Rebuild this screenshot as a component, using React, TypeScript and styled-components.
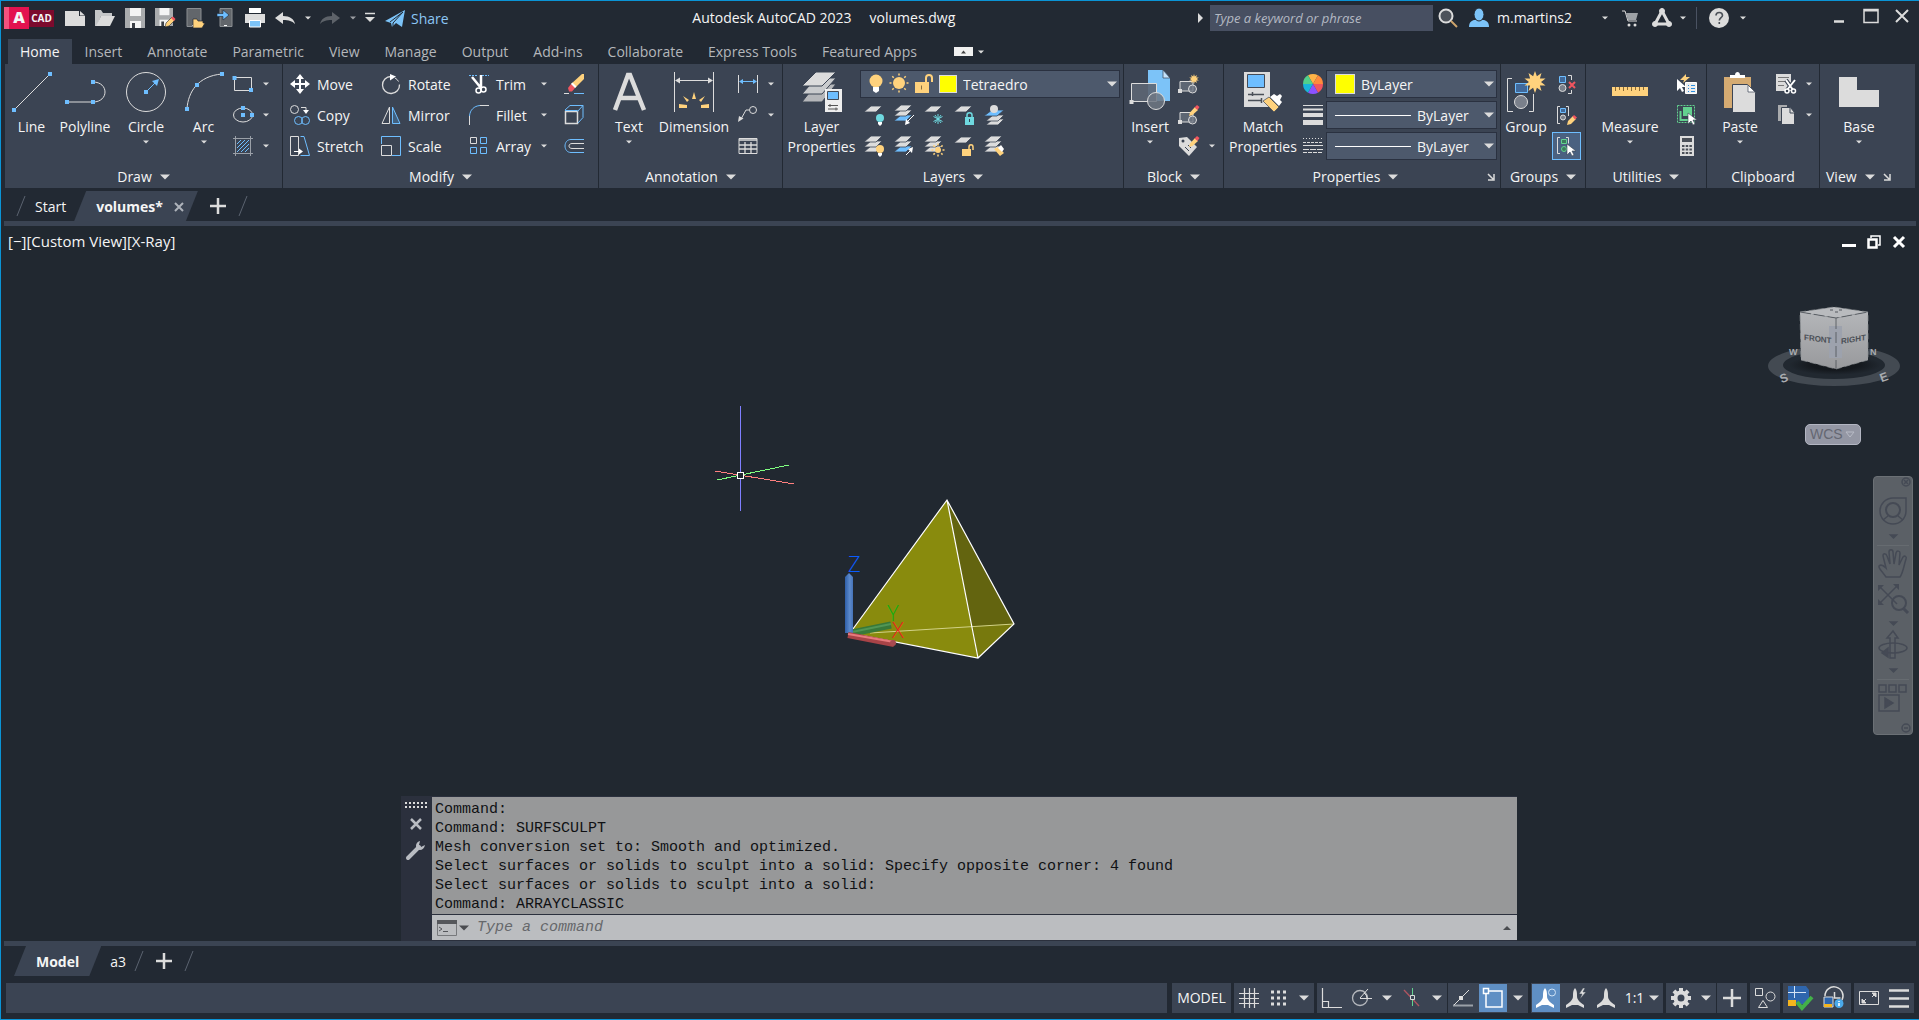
import React from 'react';
import styled, { createGlobalStyle, css } from 'styled-components';

const ink = '#dcdcdc';
const dim = '#9aa0a8';
const blue = '#6ebeff';
const gold = '#ffd27d';
const red = '#f0555f';
const teal = '#6fd9e0';
const green = '#63d18f';
const base = '#222933';
const panel = '#3b4453';

const Global = createGlobalStyle`
  * { box-sizing: border-box; }
  html, body, #root { height: 100%; }
  body {
    margin: 0;
    background: ${base};
    color: #f5f5f5;
    font: 14px/20px "Open Sans", "Noto Sans", sans-serif;
    overflow: hidden;
  }
  button, input, select { font: inherit; color: inherit; }
`;

/* ---------- shared parts ---------- */

const Window = styled.div`
  display: flex;
  flex-direction: column;
  height: 100vh;
  border: 1px solid #0a94d6;
  border-right: 0;
`;

const plain = css`
  border: 0;
  padding: 0;
  margin: 0;
  background: none;
  cursor: default;
`;

const Svg = styled.svg`
  display: block;
  flex: none;
  overflow: visible;
`;

type IconProps = { w?: number; h?: number; children: React.ReactNode };
const Icon = ({ w = 20, h = w, children }: IconProps) => (
  <Svg width={w} height={h} viewBox={`0 0 ${w} ${h}`} fill="none" stroke={ink} aria-hidden="true">
    {children}
  </Svg>
);

const Caret = ({ size = 6, color = ink }: { size?: number; color?: string }) => (
  <Icon w={10} h={10}>
    <path d={size > 6 ? 'M0 2.5h10L5 7.5z' : 'M2 3.5h6L5 6.5z'} fill={color} stroke="none" />
  </Icon>
);

const Dot = ({ x, y, c = blue }: { x: number; y: number; c?: string }) => (
  <rect x={x - 2} y={y - 2} width="4" height="4" fill={c} stroke="none" />
);

/* ---------- title bar ---------- */

const TitleBar = styled.header`
  display: flex;
  align-items: center;
  height: 34px;
  flex: none;
`;

const Logo = styled.div`
  display: flex;
  align-items: center;
  width: 50px;
  height: 22px;
  margin: 0 6px 0 3px;
`;
const LogoA = styled.span`
  width: 25px;
  height: 22px;
  padding-left: 5px;
  text-align: center;
  background: linear-gradient(90deg, #f4527e 0 5px, #e3124f 5px);
  font-size: 16px;
  line-height: 20px;
  font-weight: 800;
`;
const LogoCad = styled.span`
  width: 25px;
  height: 17px;
  text-align: center;
  background: #7c0a2d;
  font-size: 10px;
  line-height: 16px;
  font-weight: 700;
`;

const QuickButton = styled.button<{ $w?: number }>`
  ${plain}
  display: flex;
  align-items: center;
  justify-content: center;
  width: ${(p) => p.$w ?? 30}px;
  height: 28px;
`;

const ShareLink = styled.a`
  display: flex;
  align-items: center;
  gap: 6px;
  margin-left: 5px;
  padding-top: 2px;
  color: #8cc6f5;
  text-decoration: none;
`;

const AppTitle = styled.h1`
  flex: 1;
  display: flex;
  justify-content: center;
  gap: 18px;
  margin: 0;
  padding-left: 6px;
  font-size: 14px;
  font-weight: 400;
  line-height: 20px;
`;

const SearchBox = styled.input`
  ${plain}
  width: 223px;
  height: 26px;
  margin: 0 0 0 3px;
  padding: 0 4px;
  background: #474f61;
  font-size: 13px;
  &::placeholder { color: #b4b9c3; font-style: italic; opacity: 1; }
`;

const UserName = styled.button`
  ${plain}
  display: flex;
  align-items: center;
  gap: 8px;
  width: 128px;
  margin-left: 6px;
`;

const Divider = styled.span`
  width: 1px;
  height: 22px;
  margin: 0 7px;
  background: #4a5262;
`;

const WindowButtons = styled.div`
  display: flex;
  margin: 0 0 4px 71px;
  padding-right: 2px;
`;

function Phone({ children }: { children: React.ReactNode }) {
  return (
    <Icon>
      <path d="M2 .5h14v18H2z" fill="#62666b" stroke="#8a8e92" />
      <path d="M7 17.500h3" stroke="#fff" />
      {children}
    </Icon>
  );
}

const floppy = (
  <>
    <path d="M0 0h20v20H0z" fill="#a9abad" stroke="none" />
    <path d="M5 0h11v8H5z" fill="#f4f4f4" stroke="none" />
    <path d="M5 13h11v7H5z" fill="#f4f4f4" stroke="none" />
    <path d="M7 15h3v5H7z" fill="#3b3f46" stroke="none" />
  </>
);

function TitleArea() {
  return (
    <TitleBar>
      <Logo>
        <LogoA>A</LogoA>
        <LogoCad>CAD</LogoCad>
      </Logo>
      <QuickButton aria-label="New">
        <Icon><path d="M0 3h14v5h6v10H0zM15 3l5 4.500h-5z" fill={ink} stroke="none" /></Icon>
      </QuickButton>
      <QuickButton aria-label="Open">
        <Icon>
          <path d="M0 18V2h6l2 3h9v3H6L2 18z" fill="#c4c6c8" stroke="none" />
          <path d="M6 8h14l-5 10H1z" fill={ink} stroke="none" />
        </Icon>
      </QuickButton>
      <QuickButton aria-label="Save"><Icon>{floppy}</Icon></QuickButton>
      <QuickButton aria-label="Save as">
        <Icon>
          <g transform="scale(.9)">{floppy}</g>
          <path d="M10 19l1-4 6-6 3 3-6 6z" fill={gold} stroke="#222933" strokeWidth=".6" />
          <path d="M16 10l2-1.500 2.500 2.500L19 13z" fill={red} stroke="none" />
        </Icon>
      </QuickButton>
      <QuickButton aria-label="Open from mobile">
        <Phone><path d="M8 20v-9h4l1 2h5v2h2l-3 5z" fill={gold} stroke="#222933" strokeWidth=".7" /></Phone>
      </QuickButton>
      <QuickButton aria-label="Save to mobile">
        <Icon>
          <path d="M5 .5h12v18H5z" fill="#62666b" stroke="#8a8e92" />
          <path d="M9 17.500h3" stroke="#fff" />
          <path d="M2 5.500h6V2l6 5-6 5V8.500H2z" fill={blue} stroke="#222933" strokeWidth=".6" />
        </Icon>
      </QuickButton>
      <QuickButton aria-label="Plot">
        <Icon>
          <path d="M4 0h12v5H4z" fill="#fff" stroke="none" />
          <path d="M0 6h20v9H0z" fill={ink} stroke="none" />
          <path d="M4.500 12.500h11v6.500h-11z" fill="#7cc3f8" stroke="#fff" />
        </Icon>
      </QuickButton>
      <QuickButton aria-label="Undo">
        <Icon><path d="M0 10l8-6v4c7 0 11 3 12 8-3-3-6-4-12-4v4z" fill={ink} stroke="none" /></Icon>
      </QuickButton>
      <QuickButton $w={15} aria-label="Undo list"><Caret /></QuickButton>
      <QuickButton aria-label="Redo">
        <Icon><path d="M20 10l-8-6v4C5 8 1 11 0 16c3-3 6-4 12-4v4z" fill="#5d6269" stroke="none" /></Icon>
      </QuickButton>
      <QuickButton $w={15} aria-label="Redo list"><Caret color="#9b9ea3" /></QuickButton>
      <QuickButton $w={20} aria-label="Customize">
        <Icon w={12}><path d="M1 1.500h10" strokeWidth="1.500" /><path d="M1 5h10L6 10z" fill={ink} stroke="none" /></Icon>
      </QuickButton>
      <ShareLink href="#share">
        <Icon>
          <path d="M0 12L20 1l-3 17-6-4-4 4-1-4z" fill="#7cc3f8" stroke="none" />
          <path d="M5 13L18 3 8 14v4" stroke="#222933" />
        </Icon>
        Share
      </ShareLink>
      <AppTitle><span>Autodesk AutoCAD 2023</span><span>volumes.dwg</span></AppTitle>
      <QuickButton $w={14} aria-label="Collapse search">
        <Icon w={10}><path d="M3 0l5 5-5 5z" fill={ink} stroke="none" /></Icon>
      </QuickButton>
      <SearchBox aria-label="Search" placeholder="Type a keyword or phrase" />
      <QuickButton aria-label="Search">
        <Icon><circle cx="8" cy="8" r="6.500" fill="#4d525a" strokeWidth="2" /><path d="M13 13l6 6" stroke="#cda36c" strokeWidth="2" /></Icon>
      </QuickButton>
      <UserName>
        <Icon>
          <path d="M0 19c0-5 3-7 6-7h8c3 0 6 2 6 7z" fill="#7cc3f8" stroke="none" />
          <ellipse cx="10" cy="6.500" rx="5" ry="6.500" fill="#7cc3f8" stroke="#222933" />
        </Icon>
        m.martins2
      </UserName>
      <QuickButton $w={16} aria-label="Account menu"><Caret /></QuickButton>
      <QuickButton $w={34} aria-label="App store">
        <Icon w={18}>
          <path d="M1 2h3l3 10h9" />
          <path d="M5 4h12l-2 7H7z" fill="#9da1a6" stroke="none" />
          <circle cx="8" cy="16" r="1.500" fill={ink} stroke="none" /><circle cx="14" cy="16" r="1.500" fill={ink} stroke="none" />
        </Icon>
      </QuickButton>
      <QuickButton $w={30} aria-label="Autodesk App">
        <Icon>
          <path d="M10 3L3 16h14z" strokeWidth="3" />
          <circle cx="10" cy="3" r="2.500" fill={ink} /><circle cx="3" cy="16" r="2.500" fill={ink} /><circle cx="17" cy="16" r="2.500" fill={ink} />
        </Icon>
      </QuickButton>
      <QuickButton $w={12} aria-label="App menu"><Caret /></QuickButton>
      <Divider />
      <QuickButton aria-label="Help">
        <Icon>
          <circle cx="10" cy="10" r="10" fill={ink} stroke="none" />
          <path d="M7 7.500c0-4 6.500-4 6.500 0 0 2-3.200 2.500-3.200 5M10.300 14v2" stroke="#4a4f57" strokeWidth="1.600" />
        </Icon>
      </QuickButton>
      <QuickButton $w={18} aria-label="Help menu"><Caret /></QuickButton>
      <WindowButtons>
        <QuickButton $w={32} aria-label="Minimize"><Icon w={16}><path d="M3 13.500h10" strokeWidth="2.500" /></Icon></QuickButton>
        <QuickButton $w={32} aria-label="Maximize"><Icon w={16}><path d="M1 1.500h14v13H1z" strokeWidth="1.500" /><path d="M1 2.500h14" strokeWidth="2" /></Icon></QuickButton>
        <QuickButton $w={30} aria-label="Close"><Icon w={16}><path d="M2 2l12 12M14 2L2 14" strokeWidth="2" /></Icon></QuickButton>
      </WindowButtons>
    </TitleBar>
  );
}

/* ---------- ribbon tabs ---------- */

const TabRow = styled.nav`
  display: flex;
  flex: none;
  height: 29px;
  padding: 4px 0 0 7px;
`;
const RibbonTab = styled.a<{ $on?: boolean }>`
  padding: 3px 12px 0;
  margin-right: 1px;
  color: ${(p) => (p.$on ? '#f5f5f5' : '#b4b7bb')};
  background: ${(p) => (p.$on ? panel : 'none')};
  text-decoration: none;
`;
const RibbonToggle = styled.button`
  ${plain}
  display: flex;
  align-items: center;
  gap: 3px;
  margin-left: 24px;
`;

const tabs = ['Home', 'Insert', 'Annotate', 'Parametric', 'View', 'Manage', 'Output', 'Add-ins', 'Collaborate', 'Express Tools', 'Featured Apps'];

/* ---------- ribbon ---------- */

const Ribbon = styled.div`
  display: flex;
  flex: none;
  height: 124px;
  margin: 0 4px;
  background: ${panel};
`;
const Panel = styled.section<{ $w: number; $last?: boolean }>`
  display: flex;
  flex-direction: column;
  width: ${(p) => (p.$last ? 'auto' : `${p.$w}px`)};
  flex: ${(p) => (p.$last ? '1' : 'none')};
  border-right: ${(p) => (p.$last ? '0' : `1px solid ${base}`)};
`;
const PanelBody = styled.div`
  display: flex;
  flex: 1;
  padding-top: 4px;
`;
const PanelTitle = styled.button<{ $fit?: boolean }>`
  ${plain}
  display: flex;
  flex: ${(p) => (p.$fit ? 'none' : '1')};
  align-items: center;
  justify-content: center;
  gap: 8px;
`;
const PanelFoot = styled.div<{ $fit?: boolean }>`
  display: flex;
  align-items: center;
  gap: ${(p) => (p.$fit ? '8px' : '0')};
  height: 25px;
  padding: 2px 0 0 ${(p) => (p.$fit ? '6px' : '0')};
`;
const Launcher = styled.button`
  ${plain}
  width: 13px;
`;
const Big = styled.button<{ $w: number }>`
  ${plain}
  display: flex;
  flex-direction: column;
  align-items: center;
  width: ${(p) => p.$w}px;
  padding-top: 4px;
`;
const BigLabel = styled.span`
  margin-top: 5px;
  white-space: pre-line;
`;
const Column = styled.div<{ $pad?: number; $w?: number }>`
  display: flex;
  flex-direction: column;
  padding-left: ${(p) => p.$pad ?? 6}px;
  width: ${(p) => (p.$w ? `${p.$w}px` : 'auto')};
`;
const Small = styled.button<{ $on?: boolean; $gap?: number }>`
  ${plain}
  display: flex;
  align-items: center;
  gap: ${(p) => p.$gap ?? 6}px;
  height: 31px;
  ${(p) =>
    p.$on &&
    css`
      height: 28px;
      width: 29px;
      margin: 2px 0 0 -4px;
      padding-left: 3px;
      border: 1px solid ${blue};
      background: #4a6180;
    `}
`;
const SmallLabel = styled.span<{ $w?: number }>`
  min-width: ${(p) => p.$w ?? 0}px;
  padding-top: 2px;
  text-align: left;
`;
const IconRow = styled.div`
  display: flex;
  align-items: center;
  gap: 10px;
  height: 31px;
  padding-left: 4px;
`;
const Combo = styled.label<{ $w: number }>`
  display: flex;
  align-items: center;
  width: ${(p) => p.$w}px;
  height: 28px;
  margin: 2px 0 1px;
  padding: 0 2px 0 8px;
  gap: 6px;
  border: 1px solid #2a3140;
  background: #4d596c;
`;
const ComboSelect = styled.select`
  ${plain}
  flex: 1;
  min-width: 0;
  padding-top: 1px;
  appearance: none;
  outline: none;
`;
const Swatch = styled.span<{ $s?: number }>`
  width: ${(p) => p.$s ?? 18}px;
  height: ${(p) => p.$s ?? 18}px;
  flex: none;
  border: 1px solid ${ink};
  background: #ff0;
`;
const LineSample = styled.span`
  width: 76px;
  height: 1px;
  flex: none;
  background: #fff;
`;

type PanelProps = { title: string; w: number; last?: boolean; caret?: boolean; launcher?: boolean; children: React.ReactNode };
function RibbonPanel({ title, w, last, caret = true, launcher, children }: PanelProps) {
  return (
    <Panel $w={w} $last={last}>
      <PanelBody>{children}</PanelBody>
      <PanelFoot $fit={last}>
        <PanelTitle $fit={last}>{title}{caret && <Caret size={10} />}</PanelTitle>
        {launcher && (
          <Launcher aria-label={`${title} settings`}>
            <Icon w={8}><path d="M1 1l5 5M7 1v6H1" strokeWidth="1.500" /></Icon>
          </Launcher>
        )}
      </PanelFoot>
    </Panel>
  );
}

type BigProps = { label: string; w: number; caret?: boolean; children: React.ReactNode };
const BigTool = ({ label, w, caret, children }: BigProps) => (
  <Big $w={w}>
    <Icon w={40}>{children}</Icon>
    <BigLabel>{label}</BigLabel>
    {caret && <Caret />}
  </Big>
);

type ToolProps = { name: string; text?: boolean; min?: number; caret?: boolean; on?: boolean; children: React.ReactNode };
const Tool = ({ name, text, min, caret, on, children }: ToolProps) => (
  <Small aria-label={name} $on={on} $gap={text ? 7 : 8}>
    <Icon>{children}</Icon>
    {text && <SmallLabel $w={min}>{name}</SmallLabel>}
    {caret && <Caret />}
  </Small>
);

/* Layer sheets, one or three deep, with an optional blue sheet */
const Sheet = ({ y, c = ink }: { y: number; c?: string }) => (
  <path d={`M7 ${y}h11l-6 6H0z`} fill={c} stroke={panel} strokeWidth=".8" />
);
const Stack = ({ accent }: { accent?: boolean }) => (
  <>
    <Sheet y={10} c={accent ? blue : ink} />
    <Sheet y={5} />
    <Sheet y={0} />
  </>
);
const Bulb = ({ x, y, c = gold }: { x: number; y: number; c?: string }) => (
  <>
    <circle cx={x} cy={y} r="4" fill={c} stroke="none" />
    <path d={`M${x - 2} ${y + 4}h4v2l-2 2-2-2z`} fill="#fff" stroke="none" />
  </>
);
const BlockShape = () => (
  <>
    <path d="M1 7.500h13v9.500H1z" fill="#5d6673" />
    <Dot x={1} y={17} c={ink} />
    <circle cx="13.500" cy="15" r="4" fill="#6f7783" fillOpacity=".8" />
  </>
);
const Pencil = () => (
  <>
    <path d="M10 11l1-3.500L16 2l3 3-5.500 5z" fill={gold} stroke="none" />
    <path d="M15.500 2.500L18 0l2.500 2L18.500 5z" fill={red} stroke="none" />
  </>
);
const Cursor = () => <path d="M11 8v11l3-3 2 4 2-1-2-4h4z" fill="#fff" stroke={panel} strokeWidth=".6" />;
const burst = (cx: number, cy: number, r: number, k = 0.55) =>
  Array.from({ length: 20 }, (_, i) => {
    const a = (i * Math.PI) / 10 - Math.PI / 2;
    const d = i % 2 ? r * k : r;
    return `${(cx + d * Math.cos(a)).toFixed(1)},${(cy + d * Math.sin(a)).toFixed(1)}`;
  }).join(' ');

const SunIcon = ({ x, y, r }: { x: number; y: number; r: number }) => (
  <>
    <circle cx={x} cy={y} r={r} fill={gold} stroke="none" />
    {Array.from({ length: 8 }, (_, i) => (
      <path key={i} d={`M${x} ${y - r - 1.5}v-2`} stroke={gold} transform={`rotate(${i * 45} ${x} ${y})`} strokeWidth="1.500" />
    ))}
  </>
);

function DrawPanel() {
  return (
    <RibbonPanel title="Draw" w={278}>
      <BigTool label="Line" w={53}><path d="M2 38L38 2" /><Dot x={2} y={38} /><Dot x={38} y={2} /></BigTool>
      <BigTool label="Polyline" w={54}>
        <path d="M2 30h26c16 0 16-20 0-20" /><Dot x={2} y={30} /><Dot x={28} y={30} /><Dot x={28} y={10} />
      </BigTool>
      <BigTool label="Circle" w={68} caret>
        <circle cx="20" cy="20" r="19.500" /><path d="M20 20l9-9" stroke={blue} /><path d="M33 7l-2 7-5-5z" fill={blue} stroke="none" /><Dot x={20} y={20} />
      </BigTool>
      <BigTool label="Arc" w={47} caret>
        <path d="M3 37C4 20 14 4 38 2" /><Dot x={3} y={37} /><Dot x={13} y={13} /><Dot x={38} y={2} />
      </BigTool>
      <Column>
        <Tool name="Rectangle" caret><path d="M1.500 3.500h17v13h-17z" /><Dot x={1.5} y={4} /><Dot x={18} y={16} /></Tool>
        <Tool name="Ellipse" caret><ellipse cx="10" cy="10" rx="9.500" ry="7" /><Dot x={10} y={3} /><Dot x={10} y={10} /><Dot x={19} y={10} /></Tool>
        <Tool name="Hatch" caret>
          <path d="M0 2.500h20M0 17.500h20M2.500 0v20M17.500 0v20" stroke={dim} />
          <path d="M4 8l4-4M4 12l8-8M4 16L16 4M8 16l8-8M12 16l4-4" stroke={blue} />
        </Tool>
      </Column>
    </RibbonPanel>
  );
}

function ModifyPanel() {
  return (
    <RibbonPanel title="Modify" w={316}>
      <Column $pad={7} $w={98}>
        <Tool name="Move" text><path d="M10 2v16M2 10h16" stroke="#fff" strokeWidth="2" /><path d="M10 0l4 5H6zM10 20l4-5H6zM0 10l5-4v8zM20 10l-5-4v8z" fill="#fff" stroke="none" /></Tool>
        <Tool name="Copy" text>
          <circle cx="4.500" cy="4.500" r="4" /><circle cx="8.500" cy="15.500" r="4" stroke={blue} /><circle cx="15.500" cy="15.500" r="4" stroke={blue} />
          <path d="M11 2.500h5v3" /><path d="M13 5h6l-3 4z" fill="#fff" stroke="none" />
        </Tool>
        <Tool name="Stretch" text>
          <path d="M.5.5h8v19h-8z" /><path d="M10.500.5H14l5.500 19h-9" stroke={blue} /><path d="M4 15.500h6" stroke="#fff" /><path d="M9 12.500l4 3-4 3z" fill="#fff" stroke="none" />
        </Tool>
      </Column>
      <Column $pad={0} $w={88}>
        <Tool name="Rotate" text><path d="M10 2.500a8.500 8.500 0 1 0 8.500 8" strokeWidth="1.300" /><path d="M9 0l6 2.500-6 4z" fill="#fff" stroke="none" /><path d="M14 4a8 8 0 0 1 3.500 3.500" /></Tool>
        <Tool name="Mirror" text><path d="M8.500 2v16.500H1z" /><path d="M11.500 2v16.500H19z" stroke={blue} fill="#41607f" /></Tool>
        <Tool name="Scale" text><path d="M.5 8V.5h19v19H11" stroke={blue} /><path d="M.5 9.500h10v10H.5z" /></Tool>
      </Column>
      <Column $pad={0} $w={95}>
        <Tool name="Trim" text min={36} caret>
          <path d="M0 1.500h8M13 1.500h7" stroke={blue} strokeDasharray="2 1" />
          <path d="M3 3l9 11M12 1v13" stroke="#fff" strokeWidth="2.500" /><circle cx="9.500" cy="16.500" r="2.500" stroke="#fff" strokeWidth="1.500" /><circle cx="14.500" cy="15.500" r="2.500" stroke="#fff" strokeWidth="1.500" />
        </Tool>
        <Tool name="Fillet" text min={36} caret><path d="M.5 11C1 5 5 1 11 .5" stroke={blue} /><path d="M.5 11v9M11 .5h9" /></Tool>
        <Tool name="Array" text min={36} caret>
          <path d="M1.500 1.500h6v6h-6z" /><path d="M11.500 1.500h6v6h-6zM1.500 11.500h6v6h-6zM11.500 11.500h6v6h-6z" stroke={blue} />
        </Tool>
      </Column>
      <Column $pad={0}>
        <Tool name="Erase"><path d="M7 10L18 0h2v5l-9 9z" fill={gold} stroke="none" /><path d="M4 14l3-4 4 4-3 3.500H5z" fill={red} stroke="none" /><path d="M7 10l1.500-1.500 4 4L11 14z" fill="#fff" stroke="none" /><path d="M0 19.500h5" /><path d="M10 19.500h10" stroke={blue} /></Tool>
        <Tool name="Explode"><path d="M1.500 6.500h12v12h-12z" strokeWidth="1.500" /><path d="M1 5l5-4.500h13v12L14 18M13.500 6.500l5.500-6M1 5.500h12.500" stroke={blue} /></Tool>
        <Tool name="Offset"><path d="M20 3.500H7c-8 0-8 13 0 13h13" stroke={blue} /><path d="M20 7.500H8c-4 0-4 5 0 5h12" /></Tool>
      </Column>
    </RibbonPanel>
  );
}

function AnnotationPanel() {
  return (
    <RibbonPanel title="Annotation" w={184}>
      <BigTool label="Text" w={60} caret>
        <path d="M6 38L19 3h2l14 35M11 26h18" strokeWidth="4.500" />
      </BigTool>
      <BigTool label="Dimension" w={70}>
        <path d="M.5 0v40M39.500 0v40M2 8.500h36" /><path d="M1 8.500l5-3v6zM39 8.500l-5-3v6z" fill={ink} stroke="none" />
        <path d="M20 20l2 7h-4zM9 24l6 4-2 2zM31 24l-6 4 2 2zM5 32l8 1v3H5zM35 32l-8 1v3h8z" fill={gold} stroke="none" />
      </BigTool>
      <Column $pad={9}>
        <Tool name="Linear" caret><path d="M.5 1v18M19.500 1v18" /><path d="M2 7.500h16" stroke={blue} /><path d="M1 7.500l4-2.500v5zM19 7.500l-4-2.500v5z" fill={blue} stroke="none" /></Tool>
        <Tool name="Leader" caret><circle cx="15" cy="5" r="3.500" /><path d="M11 5H8l-5 9" /><path d="M0 17l1-6 4.500 2.500z" fill={ink} stroke="none" /></Tool>
        <Tool name="Table"><path d="M1 2.500h18v15H1z" /><path d="M1 4h18M1 9h18M1 13h18M7 6v11M13 6v11" strokeWidth="1.300" /></Tool>
      </Column>
    </RibbonPanel>
  );
}

function LayersPanel() {
  return (
    <RibbonPanel title="Layers" w={341}>
      <BigTool label={'Layer\nProperties'} w={77}>
        <path d="M14 12h20L20 30H0z" fill="#b5b7ba" stroke={panel} />
        <path d="M14 6h20L20 22H0z" fill="#c9cbcd" stroke={panel} />
        <path d="M14 0h20L20 14H0z" fill={ink} stroke={panel} />
        <path d="M23 17h17v23H23z" fill="#eee" stroke="none" /><path d="M25.500 19.500h11v8h-11z" fill={blue} stroke="#444b57" />
        <path d="M26 33.500h10M26 37h10M28 32v3M34 35.500v3" stroke="#555" />
      </BigTool>
      <Column $pad={0}>
        <Combo $w={260} aria-label="Layer">
          <Icon w={14} h={20}>
            <circle cx="7" cy="7" r="6.500" fill={gold} stroke="none" /><path d="M4 13h6v4l-3 2-3-2z" fill="#fff" stroke="none" />
          </Icon>
          <Icon><SunIcon x={10} y={9} r={6} /></Icon>
          <Icon w={18} h={20}><path d="M0 8h14v11H0z" fill={gold} stroke="none" /><path d="M11 9V4c0-4 6-4 6 0v4" stroke={gold} strokeWidth="2" /><path d="M6.500 11.500v4" stroke="#8a7140" /></Icon>
          <Swatch />
          <ComboSelect><option>Tetraedro</option></ComboSelect>
          <Caret size={10} />
        </Combo>
        <IconRow>
          <Icon><Sheet y={1} /><Bulb x={16} y={13} c={teal} /></Icon>
          <Icon><Stack accent /><path d="M20 10l-6 6" stroke="#fff" /><path d="M11 20l1-6 4 4z" fill="#fff" stroke="none" /></Icon>
          <Icon><Sheet y={1} /><path d="M14 9v10M9.500 11.500l9 5M18.500 11.500l-9 5M11 10l6 8M17 10l-6 8" stroke={teal} /></Icon>
          <Icon><Sheet y={1} /><path d="M11 12h9v8h-9z" fill={teal} stroke="none" /><path d="M13 12v-2c0-3 5-3 5 0v2" stroke={teal} strokeWidth="1.500" /><path d="M15.500 14v3" stroke="#345" /></Icon>
          <Icon><g transform="translate(2 0)"><Sheet y={14} /><Sheet y={10} /></g><path d="M8 5h12l-7 6H0z" fill={blue} stroke={panel} strokeWidth=".8" /><circle cx="10" cy="4" r="4" fill={ink} stroke="none" /></Icon>
        </IconRow>
        <IconRow>
          <Icon><Stack /><Bulb x={16} y={13} /></Icon>
          <Icon><Stack accent /><path d="M12 19l5-5" stroke="#fff" /><path d="M19 11l-1 6-4-4z" fill="#fff" stroke="none" /></Icon>
          <Icon><Stack /><SunIcon x={14} y={14} r={3} /></Icon>
          <Icon><Sheet y={1} /><path d="M8 13h9v7H8z" fill={gold} stroke="none" /><path d="M15 13v-2c0-3 4-3 4 0v3" stroke={gold} strokeWidth="1.500" /></Icon>
          <Icon><Stack /><path d="M10 13l4-2 6 6-4 3z" fill={gold} stroke="none" /><path d="M14 12l3-3 3 4-2 3z" fill="#fff" stroke="none" /></Icon>
        </IconRow>
      </Column>
    </RibbonPanel>
  );
}

function BlockPanel() {
  return (
    <RibbonPanel title="Block" w={100}>
      <BigTool label="Insert" w={52} caret>
        <path d="M18-2h15l7 8v23H18z" fill="#7cc3f8" stroke="none" /><path d="M33-2v8h7z" fill="#c5e3fb" stroke={panel} strokeWidth=".7" />
        <path d="M1.500 11.500h25v18h-25z" fill="#5d6673" fillOpacity=".9" /><circle cx="26" cy="29" r="8.500" fill="#6f7783" fillOpacity=".85" /><Dot x={1.5} y={30} c={ink} />
      </BigTool>
      <Column $pad={3}>
        <Tool name="Create block"><BlockShape /><polygon points={burst(15, 5, 5)} fill={gold} stroke="none" /></Tool>
        <Tool name="Edit block"><BlockShape /><Pencil /></Tool>
        <Tool name="Edit attributes" caret><path d="M0 2l8-1 10 10-8 9L0 10z" fill={ink} stroke="none" /><circle cx="4" cy="5" r="1.500" fill={panel} stroke="none" /><path d="M6 11l4 4M9 9l3 3" stroke={panel} /><Pencil /></Tool>
      </Column>
    </RibbonPanel>
  );
}

const wheel = ['#ffb347', '#ff8a3c', '#f0555f', '#8c52ff', '#19b5d8', '#52d08a'];

function PropertiesPanel() {
  return (
    <RibbonPanel title="Properties" w={277} launcher>
      <BigTool label={'Match\nProperties'} w={78}>
        <path d="M1 0h26v35H1z" fill={ink} stroke="none" /><path d="M4.500 2.500h17v13h-17z" fill={blue} stroke="#444b57" />
        <path d="M5 22.500h16M5 28.500h14M9.500 20v4M18.500 26v5" stroke="#4a4f57" strokeWidth="1.500" />
        <path d="M20 29l6-4 10 10-5 5z" fill={gold} stroke={panel} strokeWidth=".7" /><path d="M27 25l4-3 3 2 3-2 2 2-2 4 2 2-3 4z" fill="#fff" stroke="none" />
      </BigTool>
      <Column $pad={1} $w={24}>
        <Tool name="Color">
          {wheel.map((c, i) => (
            <path key={c} d="M10 10V0a10 10 0 0 1 8.660 5z" fill={c} stroke="none" transform={`rotate(${i * 60 - 30} 10 10)`} />
          ))}
        </Tool>
        <Tool name="Lineweight"><path d="M0 0.500h20" /><path d="M0 4.500h20" strokeWidth="2" /><path d="M0 10h20" strokeWidth="4" /><path d="M0 17.500h20" strokeWidth="5" /></Tool>
        <Tool name="Linetype"><path d="M0 2.500h20" strokeDasharray="1 2" /><path d="M0 6.500h20" strokeDasharray="3 1" /><path d="M0 9.500h20" /><path d="M0 13.500h20" strokeDasharray="6 1" /><path d="M0 16.500h20" strokeDasharray="4 1" /></Tool>
      </Column>
      <Column $pad={0}>
        <Combo $w={171} aria-label="Object color"><Swatch $s={20} /><ComboSelect><option>ByLayer</option></ComboSelect><Caret size={10} /></Combo>
        <Combo $w={171} aria-label="Lineweight"><LineSample /><ComboSelect><option>ByLayer</option></ComboSelect><Caret size={10} /></Combo>
        <Combo $w={171} aria-label="Linetype"><LineSample /><ComboSelect><option>ByLayer</option></ComboSelect><Caret size={10} /></Combo>
      </Column>
    </RibbonPanel>
  );
}

function GroupsPanel() {
  return (
    <RibbonPanel title="Groups" w={85}>
      <BigTool label="Group" w={50}>
        <path d="M6 6.500H1.500v33H7M23 39.500h4.500V22" /><path d="M9.500 11.500h12v9h-12z" fill="#41699a" stroke={blue} /><circle cx="15" cy="30" r="6.500" fill="#7a808b" />
        <polygon points={burst(29, 10, 11)} fill={gold} stroke="none" />
      </BigTool>
      <Column $pad={5}>
        <Tool name="Ungroup"><path d="M3.500 2.500h6v6h-6z" fill="#41699a" stroke={blue} /><circle cx="6.500" cy="14" r="3.500" fill="#7a808b" /><path d="M12 1.500h3.500V6M12 19.500h3.500V16" /><path d="M13 8l6 6M19 8l-6 6" stroke={red} strokeWidth="2" /></Tool>
        <Tool name="Group edit"><path d="M4 1.500H1.500v17H4M10 1.500h2.500V11" /><path d="M4.500 3.500h5v4h-5z" fill="#41699a" stroke={blue} /><circle cx="7" cy="12.500" r="2.500" fill="#7a808b" /><path d="M11 20l1-4 5-5 3 3-5 5z" fill={gold} stroke="none" /><path d="M16.500 11.500l1.500-1.500 3 2.500-2 2z" fill={red} stroke="none" /></Tool>
        <Tool name="Group selection" on><path d="M4 1.500H1.500v16H4M10 1.500h2.500v6" /><path d="M5.500 3.500h5v4h-5z" stroke={green} fill="#3c7c5c" /><circle cx="8" cy="13" r="2.500" stroke={green} fill="#3c7c5c" /><Cursor /></Tool>
      </Column>
    </RibbonPanel>
  );
}

function UtilitiesPanel() {
  return (
    <RibbonPanel title="Utilities" w={121}>
      <BigTool label="Measure" w={88} caret>
        <path d="M2 15h36v9H2z" fill={gold} stroke="none" /><path d="M5.500 15v4M9.500 15v3M13.500 15v4M17.500 15v3M21.500 15v4M25.500 15v3M29.500 15v4M33.500 15v3" stroke="#8a6a35" />
      </BigTool>
      <Column $pad={3}>
        <Tool name="Quick select"><path d="M9 0L3 6h4l-1 3 7-6H9z" fill={gold} stroke="none" /><path d="M8.500 8.500h11v11h-11z" fill="#eee" stroke="#fff" /><path d="M11 11.500h1M14 11.500h4M11 14.500h1M14 14.500h4M11 17.500h1M14 17.500h4" stroke="#2c8fe0" /><path d="M0 5v12l3-3 2 4 2-1-2-4h4z" fill="#fff" stroke="none" /></Tool>
        <Tool name="Select all"><path d="M.5.5h17v17H.5z" stroke={green} strokeDasharray="2 1" /><path d="M6 2h9v9H6z" fill={green} stroke="none" /><path d="M3.500 6v9H12" stroke={green} strokeWidth="2" /><Cursor /></Tool>
        <Tool name="Calculator"><path d="M3 0h14v20H3z" fill={ink} stroke="none" /><path d="M5 2h10v4H5z" fill="#4a4f57" stroke="none" /><path d="M5 10h10M5 13.500h10M5 17h10" stroke="#4a4f57" strokeWidth="2" strokeDasharray="2.500 1.200" /></Tool>
      </Column>
    </RibbonPanel>
  );
}

function ClipboardPanel() {
  return (
    <RibbonPanel title="Clipboard" w={113} caret={false}>
      <BigTool label="Paste" w={66} caret>
        <path d="M4 5h27v31H4z" fill="#d5ab72" stroke="none" /><path d="M10 6V3h5c0-4 5-4 5 0h5v3z" fill="#fff" stroke="none" />
        <path d="M12.500 12.500h15l8 8v20h-23z" fill={ink} stroke={panel} /><path d="M28 13v7h7z" fill="#fff" stroke={panel} strokeWidth=".7" />
      </BigTool>
      <Column $pad={3}>
        <Tool name="Cut" caret><path d="M0 0h15v17H0z" fill={ink} stroke="none" /><path d="M2 3.500h11M2 7.500h7M2 11.500h6" stroke="#777" /><path d="M10 6l7 10M19 6l-8 10" stroke={panel} strokeWidth="4" /><path d="M10 6l7 10M19 6l-8 10" stroke="#fff" strokeWidth="2" /><circle cx="11" cy="17" r="2" stroke="#fff" strokeWidth="1.500" fill={panel} /><circle cx="17.500" cy="17" r="2" stroke="#fff" strokeWidth="1.500" fill={panel} /></Tool>
        <Tool name="Copy clip" caret><path d="M2 0h9v16H2z" fill="#a9abad" stroke="none" /><path d="M5.500 2.500h9l4 5v12h-13z" fill={ink} stroke={panel} /><path d="M14 3v5h4.500" stroke={panel} /></Tool>
      </Column>
    </RibbonPanel>
  );
}

/* ---------- drawing and layout tabs ---------- */

const FileTabs = styled.nav`
  display: flex;
  align-items: flex-end;
  flex: none;
  height: 33px;
  padding-left: 15px;
`;
const Slant = styled.a<{ $on?: boolean; $end?: number }>`
  display: flex;
  align-items: center;
  gap: 11px;
  height: 30px;
  padding: ${(p) => (p.$on ? `1px ${p.$end ?? 14}px 0 22px` : '1px 8px 0 9px')};
  color: inherit;
  text-decoration: none;
  font-weight: ${(p) => (p.$on ? 700 : 400)};
  background: ${(p) => (p.$on ? panel : 'none')};
  clip-path: ${(p) => (p.$on ? 'polygon(12px 0, 100% 0, calc(100% - 12px) 100%, 0 100%)' : 'none')};
`;
const AddTab = styled.button`
  ${plain}
  display: flex;
  align-items: center;
  height: 30px;
  padding: 0 12px;
`;
const Slash = () => (
  <Icon w={10} h={30}><path d="M1 25L9 5" stroke="#5b6370" /></Icon>
);
const Plus = () => (
  <Icon w={16}><path d="M8 0v16M0 8h16" strokeWidth="2.500" /></Icon>
);
const Strip = styled.div`
  height: 5px;
  flex: none;
  margin: 0 3px;
  background: ${panel};
`;
const LayoutTabs = styled.nav`
  display: flex;
  flex: none;
  height: 37px;
  padding-left: 13px;
`;

/* ---------- viewport ---------- */

const Viewport = styled.main`
  position: relative;
  display: flex;
  flex: 1;
  flex-direction: column;
  justify-content: space-between;
  min-height: 0;
  background: #212830;
`;
const ViewHead = styled.div`
  display: flex;
  justify-content: space-between;
  padding: 5px 13px 0 7px;
`;
const ViewLabel = styled.div`
  display: flex;
  font-size: 15px;
`;
const ViewLink = styled.button`
  ${plain}
`;
const DocButtons = styled.div`
  display: flex;
  gap: 11px;
  padding-top: 4px;
`;
const IconButton = styled.button`
  ${plain}
  display: flex;
`;
const Placed = styled.svg<{ $x: number; $y: number }>`
  position: absolute;
  left: ${(p) => p.$x}px;
  top: ${(p) => p.$y}px;
  overflow: visible;
`;
const Axis = styled.text`
  font: 300 22px "Open Sans", sans-serif;
`;
const CubeText = styled.text`
  font: 700 8px "Liberation Sans", sans-serif;
  fill: #4b5057;
`;
const Compass = styled.text<{ $s?: number }>`
  font: 700 ${(p) => p.$s ?? 12}px "Liberation Sans", sans-serif;
  fill: #a9acb0;
`;
const Wcs = styled.button`
  ${plain}
  position: absolute;
  right: 58px;
  top: 198px;
  display: flex;
  align-items: center;
  justify-content: space-between;
  width: 56px;
  height: 21px;
  padding: 0 5px 0 4px;
  border: 1px solid #b3b6c2;
  border-radius: 5px;
  background: #9497a4;
  color: #646772;
  font: 14px/19px "Liberation Sans", sans-serif;
`;
const CubeHolder = styled.div`
  position: absolute;
  right: 17px;
  top: 76px;
`;
const NavBar = styled.div`
  position: absolute;
  right: 6px;
  top: 250px;
  display: flex;
  flex-direction: column;
  align-items: center;
  width: 40px;
  height: 259px;
  border: 1px solid #6b7075;
  border-radius: 4px;
  background: #5b6066;
`;

function Scene() {
  return (
    <>
      <Placed $x={714} $y={180} width="80" height="106" fill="none" shapeRendering="crispEdges" aria-hidden="true">
        <path d="M25.500 0v105" stroke="#7f7fff" />
        <path d="M2 74L74 59" stroke="#7fff7f" />
        <path d="M0 65L79 78" stroke="#ff7f7f" />
        <rect x="22.500" y="66.500" width="6" height="6" fill="#212830" stroke="#fff" />
      </Placed>
      <Placed $x={839} $y={269} width="180" height="170" fill="none" aria-label="Tetrahedron">
        <defs>
          <linearGradient id="zbar"><stop stopColor="#2f5fa8" /><stop offset=".6" stopColor="#5d8acb" /><stop offset="1" stopColor="#4573b8" /></linearGradient>
        </defs>
        <path d="M107 5L10 138l128 25z" fill="#898b0d" />
        <path d="M107 5l31 158 36-34z" fill="#63640f" />
        <path d="M138 163l36-34-41 2.500z" fill="#77790d" />
        <path d="M30 138l144-9" stroke="#d2d287" />
        <path d="M107 5L10 138l128 25 36-34zM107 5l31 158" stroke="#fff" strokeWidth="1.200" />
        <path d="M12 138l39-8" stroke="#38793a" strokeWidth="7" />
        <path d="M12 137l39-8" stroke="#529655" strokeWidth="2" />
        <path d="M5 82l4-4 4 4v56H5z" fill="url(#zbar)" />
        <path d="M8 140l46 9" stroke="#a84347" strokeWidth="6" />
        <path d="M8 139l46 8" stroke="#e77a7c" strokeWidth="2" />
        <circle cx="53" cy="148" r="3" fill="#a84a50" />
        <Axis x="8" y="77" fill="#0a5cff">Z</Axis>
        <Axis x="47" y="126" fill="#10b010">Y</Axis>
        <Axis x="52" y="143" fill="#f02020">X</Axis>
      </Placed>
    </>
  );
}

function ViewCube() {
  return (
    <CubeHolder>
      <Svg width="136" height="84" viewBox="0 0 136 84" aria-label="View cube">
        <defs>
          <radialGradient id="shade"><stop offset=".5" stopColor="#14181d" /><stop offset="1" stopColor="#14181d" stopOpacity="0" /></radialGradient>
          <linearGradient id="face" x1="0" y1="0" x2="0" y2="1"><stop stopColor="#b4b6b9" /><stop offset="1" stopColor="#98999c" /></linearGradient>
        </defs>
        <path
          d="M2 64a66 20 0 0 1 132 0a66 20 0 0 1-132 0zM17 63a51 14 0 0 0 102 0a51 14 0 0 0-102 0z"
          fill="#434a52"
          fillRule="evenodd"
        />
        <ellipse cx="69" cy="63" rx="46" ry="10" fill="url(#shade)" />
        <Compass x="14" y="80" transform="rotate(-20 18 76)">S</Compass>
        <Compass x="114" y="79" transform="rotate(-20 118 75)">E</Compass>
        <Compass $s={9} x="23" y="53">W</Compass>
        <Compass $s={9} x="104" y="53">N</Compass>
        <path d="M34 10l34-5 34 5-32 6z" fill="#b9bbbe" />
        <path d="M34 10l36 6v51L35 58z" fill="url(#face)" />
        <path d="M102 10l-32 6v51l32-9z" fill="url(#face)" />
        <path d="M63 24h13v32H63z" fill="#9da2ad" />
        <path d="M34 10l36 6 32-6M70 16v51" fill="none" stroke="#4b5057" strokeDasharray="11 3" strokeWidth=".8" />
        <path d="M34 10l34-5 34 5v48l-32 9-35-9z" fill="none" stroke="#8d9094" strokeDasharray="6 3" strokeWidth=".7" />
        <path d="M64 8h3M69 10h3M73 8h3" stroke="#55595f" />
        <CubeText transform="translate(38 38) skewY(7)">FRONT</CubeText>
        <CubeText transform="translate(75 42) skewY(-9)">RIGHT</CubeText>
      </Svg>
    </CubeHolder>
  );
}

function Navigation() {
  const c = '#454a55';
  return (
    <NavBar>
      <Svg width="38" height="257" viewBox="0 0 38 257" fill="none" stroke={c} strokeWidth="1.500" aria-label="Navigation bar">
        <circle cx="32" cy="5" r="4" /><path d="M30 3l4 4M34 3l-4 4" />
        <path d="M19 21h13v13a13 13 0 1 1-13-13z" /><circle cx="19" cy="33" r="7" strokeWidth="2" /><path d="M14 39l-5 4M24 39l5 4" />
        <path d="M16.500 58h6l-3 3z" fill={c} /><path d="M3 68.500h32" stroke="#666b70" strokeWidth="1" />
        <path d="M12 100C8 94 4 91 5 89c2-2 5 0 7 2L9 79c0-3 3-3 4 0l3 8-1-12c0-3 4-3 4 0l1 12 2-11c1-3 4-2 4 0l-1 12 4-8c2-2 4 0 3 2-2 6-3 14-6 18z" />
        <path d="M5 109l18 18M24 108L5 127" /><path d="M4 108h6l-6 6zM25 107h-6l6 6zM4 128h6l-6-6z" fill={c} stroke="none" />
        <circle cx="25" cy="126" r="7" strokeWidth="2" /><path d="M29 131l5 5" strokeWidth="3" />
        <path d="M16.500 145h6l-3 3z" fill={c} />
        <path d="M19 154l5 7h-3v20h-5v-20h-3z" /><ellipse cx="19" cy="171" rx="14" ry="5" /><path d="M14 171v9l-6-4z" fill={c} />
        <path d="M16.500 192h6l-3 3z" fill={c} /><path d="M3 202.500h32" stroke="#666b70" strokeWidth="1" />
        <path d="M5 208h7v7H5zM15 208h7v7h-7zM25 208h7v7h-7zM5 218h20v16H5z" /><path d="M11 221v10l8-5z" fill={c} />
        <circle cx="32" cy="251" r="4" /><path d="M30 251h4" />
      </Svg>
    </NavBar>
  );
}

/* ---------- command line ---------- */

const CommandWindow = styled.section`
  display: flex;
  width: 1116px;
  max-width: 70%;
  margin-left: 400px;
  background: #2b303d;
`;
const Grip = styled.div`
  display: flex;
  flex-direction: column;
  align-items: center;
  gap: 10px;
  width: 31px;
  padding: 6px 2px 0 0;
`;
const CommandMain = styled.div`
  flex: 1;
  padding: 1px 0;
`;
const History = styled.pre`
  margin: 0;
  height: 117px;
  padding: 3px 3px 0;
  background: #979899;
  color: #101114;
  font: 15px/19px "Liberation Mono", monospace;
`;
const Prompt = styled.label`
  display: flex;
  align-items: center;
  gap: 2px;
  height: 25px;
  margin-top: 1px;
  padding: 1px 5px 0;
  background: #bbbdc0;
`;
const PromptInput = styled.input`
  ${plain}
  flex: 1;
  margin-left: 6px;
  outline: none;
  color: #222;
  font: 15px/20px "Liberation Mono", monospace;
  &::placeholder { color: #66686b; font-style: italic; opacity: 1; }
`;

const history = `Command:
Command: SURFSCULPT
Mesh conversion set to: Smooth and optimized.
Select surfaces or solids to sculpt into a solid: Specify opposite corner: 4 found
Select surfaces or solids to sculpt into a solid:
Command: ARRAYCLASSIC`;

function Command() {
  return (
    <CommandWindow>
      <Grip>
        <Icon w={22} h={6}><path d="M0 1h22M0 5h22" strokeWidth="2" strokeDasharray="2 2" /></Icon>
        <IconButton aria-label="Close command line"><Icon w={12}><path d="M1 1l10 10M11 1L1 11" strokeWidth="2.500" stroke="#b9bcc2" /></Icon></IconButton>
        <IconButton aria-label="Customize command line">
          <Icon><path d="M2 18L13 7" strokeWidth="4" stroke="#b9bcc2" strokeLinecap="round" /><path d="M14 1c-4 1-5 5-3 8 3 2 7 1 8-4l-4 2-2-2z" fill="#b9bcc2" stroke="none" /></Icon>
        </IconButton>
      </Grip>
      <CommandMain>
        <History>{history}</History>
        <Prompt>
          <Icon w={20} h={16}><path d="M.5.5h19v15H.5z" stroke="#77797c" /><path d="M0 0h20v4H0z" fill="#55575b" stroke="none" /><path d="M2 7l3 2-3 2M6 11.500h5" stroke="#55575b" /></Icon>
          <Caret size={10} color="#4a4c50" />
          <PromptInput aria-label="Command" placeholder="Type a command" />
          <Icon w={10}><path d="M1 7l4-4 4 4z" fill="#4a4c50" stroke="none" /></Icon>
        </Prompt>
      </CommandMain>
    </CommandWindow>
  );
}

/* ---------- status bar ---------- */

const StatusBar = styled.footer`
  display: flex;
  flex: none;
  gap: 3px;
  height: 36px;
  padding: 0 5px 6px;
`;
const Coordinates = styled.div`
  flex: 1;
  margin-right: 2px;
  background: ${panel};
`;
const StatusGroup = styled.div<{ $tight?: boolean }>`
  display: flex;
  margin-right: ${(p) => (p.$tight ? '-2px' : '0')};
  background: ${panel};
`;
const StatusButton = styled.button<{ $w?: number; $on?: boolean }>`
  ${plain}
  display: flex;
  align-items: center;
  justify-content: center;
  gap: 5px;
  width: ${(p) => p.$w ?? 30}px;
  border: 1px solid ${panel};
  background: ${(p) => (p.$on ? '#5f8fc4' : 'none')};
`;
const Arrow = ({ name }: { name: string }) => (
  <StatusButton $w={20} aria-label={name}><Caret size={10} /></StatusButton>
);
const shipPath = 'M10 0c2 2 2 5 2 8 0 4 3 6 7 9v3l-6-3h-6l-6 3v-3c4-3 7-5 7-9 0-3 0-6 2-8z';

function Status() {
  return (
    <StatusBar>
      <Coordinates />
      <StatusGroup><StatusButton $w={59}>MODEL</StatusButton></StatusGroup>
      <StatusGroup>
        <StatusButton aria-label="Grid"><Icon><path d="M5.500 0v20M10.500 0v20M15.500 0v20M0 5.500h20M0 10.500h20M0 15.500h20" strokeWidth="1.200" /></Icon></StatusButton>
        <StatusButton aria-label="Snap"><Icon w={16}><path d="M0 2h16M0 8h16M0 14h16" strokeWidth="3" strokeDasharray="3 3" /></Icon></StatusButton>
        <Arrow name="Snap settings" />
      </StatusGroup>
      <StatusGroup $tight>
        <StatusButton aria-label="Ortho"><Icon><path d="M.5 0v19.500H20M.5 13.500h6v6" strokeWidth="1.200" /></Icon></StatusButton>
        <StatusButton aria-label="Polar"><Icon><circle cx="8" cy="10" r="7.500" stroke="#b5b8bd" strokeWidth="1.300" /><path d="M8 10.500h12M8 10l8-9" /><path d="M12 5a6 6 0 0 1 3 5" /></Icon></StatusButton>
        <Arrow name="Polar settings" />
        <StatusButton aria-label="Isodraft"><Icon><path d="M2 2l15 16" stroke="#b05560" strokeWidth="1.300" /><path d="M10.500 0v18" stroke={green} /><path d="M8.500 7.500h4v4h-4z" fill={panel} /></Icon></StatusButton>
        <Arrow name="Isodraft settings" />
      </StatusGroup>
      <StatusGroup>
        <StatusButton aria-label="Object tracking"><Icon><path d="M0 17.500h20" strokeWidth="2" stroke={dim} /><path d="M1 17L16 2" /><Dot x={8} y={10} c={ink} /></Icon></StatusButton>
        <StatusButton $on aria-label="Object snap"><Icon><path d="M3 3h16v16H3z" stroke="#fff" strokeWidth="1.500" /><path d="M.5.5h5v5h-5z" fill="#5f8fc4" stroke="#fff" strokeWidth="1.500" /></Icon></StatusButton>
        <Arrow name="Object snap settings" />
      </StatusGroup>
      <StatusGroup>
        <StatusButton $on aria-label="Annotation visibility"><Icon><path d={shipPath} fill="#fff" stroke="none" transform="translate(-1 0)" /><circle cx="16" cy="4.500" r="3.500" stroke="#cfe2f5" /></Icon></StatusButton>
        <StatusButton aria-label="Auto scale"><Icon><path d={shipPath} fill={ink} stroke="none" transform="translate(-1 0)" /><path d="M17 0l-4 6h3l-2 5 6-7h-3l2-4z" fill={ink} stroke={panel} strokeWidth=".5" /></Icon></StatusButton>
        <StatusButton aria-label="Annotation scale"><Icon><path d={shipPath} fill={ink} stroke="none" /></Icon></StatusButton>
        <StatusButton $w={42}>1:1<Caret size={10} /></StatusButton>
      </StatusGroup>
      <StatusGroup $tight>
        <StatusButton aria-label="Workspace">
          <Icon>
            <circle cx="10" cy="10" r="5.500" strokeWidth="4" />
            {Array.from({ length: 8 }, (_, i) => <path key={i} d="M10 0v4" strokeWidth="4" transform={`rotate(${i * 45} 10 10)`} />)}
          </Icon>
        </StatusButton>
        <Arrow name="Workspace list" />
      </StatusGroup>
      <StatusGroup><StatusButton aria-label="Annotation monitor"><Icon w={18}><path d="M9 0v18M0 9h18" strokeWidth="2.500" /></Icon></StatusButton></StatusGroup>
      <StatusGroup><StatusButton aria-label="Isolate"><Icon><path d="M.5.5h7v7h-7zM8 12.500l4.500 7h-9z" /><circle cx="15.500" cy="8.500" r="4.500" /></Icon></StatusButton></StatusGroup>
      <StatusGroup>
        <StatusButton $w={34} aria-label="Drawing check">
          <Icon w={26} h={26}><path d="M1 1h18l3 4v14H1z" fill="#2f66ad" stroke="none" /><path d="M1 15h8v6H1z" fill="#f5b51e" stroke="none" /><path d="M1 7.500h18M7.500 1v12" stroke="#d6e4f5" /><path d="M10 17l5 6 10-11" stroke="#43b049" strokeWidth="4" /></Icon>
        </StatusButton>
        <StatusButton $w={34} aria-label="Activity">
          <Icon><path d="M1 8a9 9 0 1 1 17 4M10.500 4v6h6" strokeWidth="1.500" /><path d="M0 9h9v10H0z" fill="#2f66ad" stroke={ink} /><path d="M0 16h8v3H0z" fill="#f5b51e" stroke="none" /><circle cx="15" cy="15.500" r="4.500" fill="#4aa9ea" stroke="none" /><path d="M15 13v1M15 15v3" stroke="#fff" strokeWidth="1.500" /></Icon>
        </StatusButton>
      </StatusGroup>
      <StatusGroup>
        <StatusButton aria-label="Clean screen"><Icon><path d="M.5 3.500h19v13H.5z" /><path d="M13 5h4v4zM3 11v4h4zM13 9l3-3M4 14l3-3" fill={ink} /></Icon></StatusButton>
        <StatusButton aria-label="Customization"><Icon><path d="M0 2.500h20M0 10.500h20M0 18.500h20" strokeWidth="2.500" /></Icon></StatusButton>
      </StatusGroup>
    </StatusBar>
  );
}

export default function App() {
  return (
    <Window>
      <Global />
      <TitleArea />
      <TabRow>
        {tabs.map((t, i) => <RibbonTab key={t} href="#ribbon" $on={i === 0}>{t}</RibbonTab>)}
        <RibbonToggle aria-label="Minimize ribbon">
          <Icon w={19} h={9}><path d="M0 0h19v9H0z" fill="#f0f0f0" stroke="none" /><path d="M7 6.500l2.500-3L12 6.500z" fill="#444" stroke="none" /></Icon>
          <Caret />
        </RibbonToggle>
      </TabRow>
      <Ribbon>
        <DrawPanel />
        <ModifyPanel />
        <AnnotationPanel />
        <LayersPanel />
        <BlockPanel />
        <PropertiesPanel />
        <GroupsPanel />
        <UtilitiesPanel />
        <ClipboardPanel />
        <RibbonPanel title="View" w={95} last launcher>
          <BigTool label="Base" w={78} caret><path d="M0 5h18v13h22v17H0z" fill={ink} stroke="none" /></BigTool>
        </RibbonPanel>
      </Ribbon>
      <FileTabs>
        <Slash />
        <Slant href="#start">Start</Slant>
        <Slant href="#volumes" $on>volumes*<Icon w={10}><path d="M1 1l8 8M9 1L1 9" strokeWidth="2" stroke="#aeb3bb" /></Icon></Slant>
        <AddTab aria-label="New drawing"><Plus /></AddTab>
        <Slash />
      </FileTabs>
      <Strip />
      <Viewport>
        <ViewHead>
          <ViewLabel><ViewLink>[−]</ViewLink><ViewLink>[Custom View]</ViewLink><ViewLink>[X-Ray]</ViewLink></ViewLabel>
          <DocButtons>
            <IconButton aria-label="Minimize drawing"><Icon w={14}><path d="M0 10.500h14" stroke="#fff" strokeWidth="3" /></Icon></IconButton>
            <IconButton aria-label="Restore drawing"><Icon w={14}><path d="M4 3V1h9v9h-2" stroke="#fff" strokeWidth="1.500" /><path d="M1.500 4.500h8v8h-8z" stroke="#fff" strokeWidth="2.500" /></Icon></IconButton>
            <IconButton aria-label="Close drawing"><Icon w={14}><path d="M2 2l10 10M12 2L2 12" stroke="#fff" strokeWidth="3" /></Icon></IconButton>
          </DocButtons>
        </ViewHead>
        <Scene />
        <ViewCube />
        <Wcs>WCS<Icon w={10}><path d="M1 2h8L5 7z" stroke="#b8bbc6" /></Icon></Wcs>
        <Navigation />
        <Command />
      </Viewport>
      <Strip />
      <LayoutTabs>
        <Slant href="#model" $on $end={22}>Model</Slant>
        <Slant href="#a3">a3</Slant>
        <Slash />
        <AddTab aria-label="New layout"><Plus /></AddTab>
        <Slash />
      </LayoutTabs>
      <Status />
    </Window>
  );
}
